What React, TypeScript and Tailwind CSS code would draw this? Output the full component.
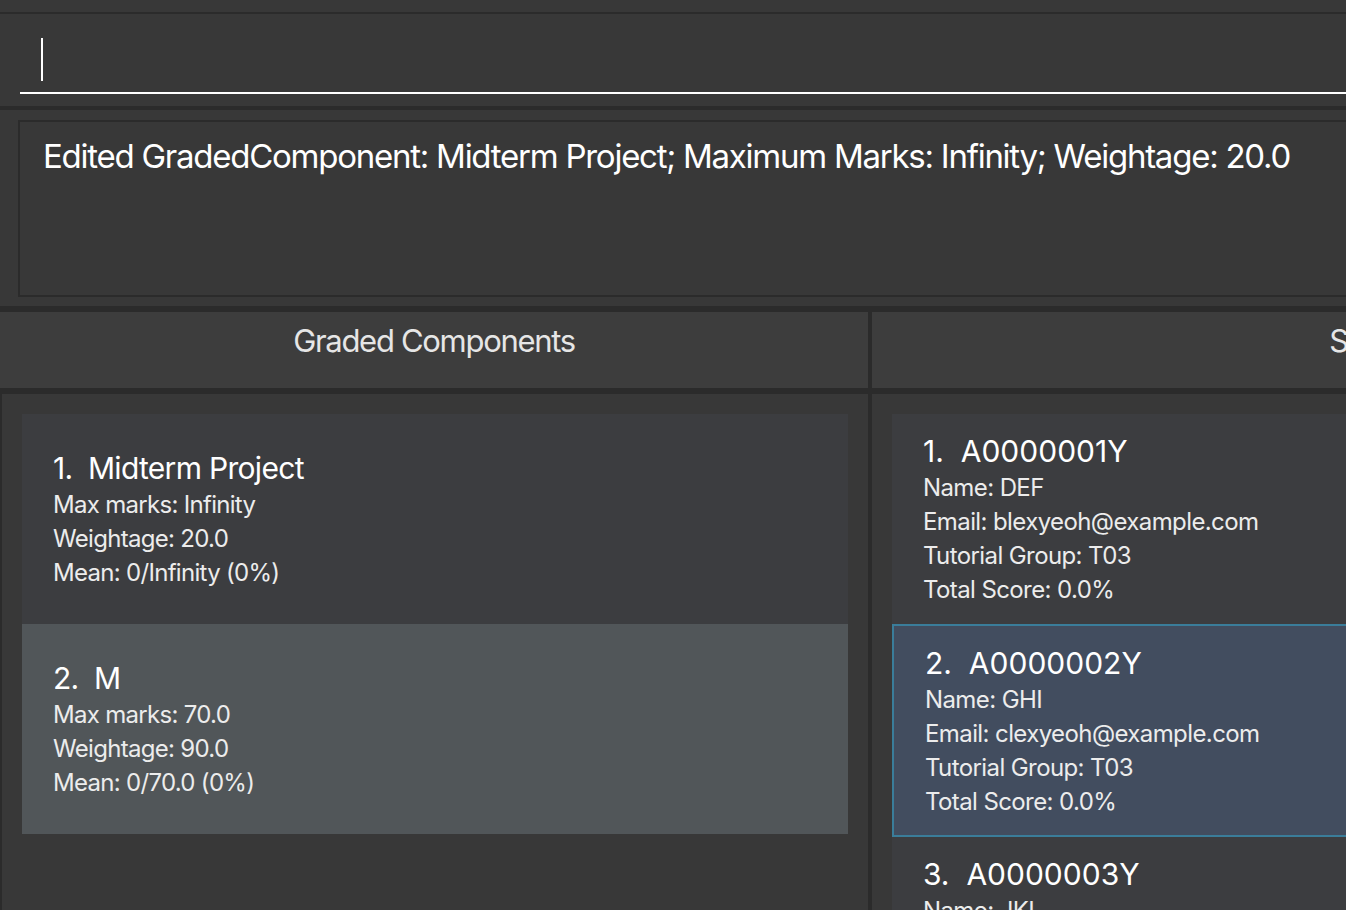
const font = { fontFamily: '"Inter", "Liberation Sans", sans-serif' };

type GradedComponent = {
  name: string;
  maxMarks: string;
  weightage: string;
  mean: string;
};

type Student = {
  id: string;
  name: string;
  email: string;
  tutorial: string;
  score: string;
};

const components: GradedComponent[] = [
  { name: "Midterm Project", maxMarks: "Infinity", weightage: "20.0", mean: "0/Infinity (0%)" },
  { name: "M", maxMarks: "70.0", weightage: "90.0", mean: "0/70.0 (0%)" },
];

const students: Student[] = [
  { id: "A0000001Y", name: "DEF", email: "blexyeoh@example.com", tutorial: "T03", score: "0.0%" },
  { id: "A0000002Y", name: "GHI", email: "clexyeoh@example.com", tutorial: "T03", score: "0.0%" },
  { id: "A0000003Y", name: "JKL", email: "dlexyeoh@example.com", tutorial: "T03", score: "0.0%" },
];

function ComponentCard({ index, item, selected }: { index: number; item: GradedComponent; selected?: boolean }) {
  return (
    <div
      className={
        "h-[210px] flex flex-col justify-center pl-[31px] " +
        (selected ? "bg-[#515659]" : "bg-[#3c3d40]")
      }
    >
      <div className="text-[30px] leading-[40px] tracking-[-0.7px] text-white">
        {index}.&nbsp;&nbsp;{item.name}
      </div>
      <div className="text-[24px] leading-[34px] tracking-[-0.7px] text-[#ececec]">
        <div>Max marks: {item.maxMarks}</div>
        <div>Weightage: {item.weightage}</div>
        <div>Mean: {item.mean}</div>
      </div>
    </div>
  );
}

function StudentCard({ index, s, selected }: { index: number; s: Student; selected?: boolean }) {
  return (
    <div
      className={
        "flex flex-col justify-center pl-[31px] " +
        (selected ? "h-[213px] bg-[#424d5f] border-2 border-[#3a7d9a]" : "h-[210px] bg-[#3c3d40]")
      }
    >
      <div className="text-[30px] leading-[40px] text-white">
        {index}.&nbsp;&nbsp;{s.id}
      </div>
      <div className="text-[24px] leading-[34px] tracking-[-0.6px] text-[#ececec]">
        <div>Name: {s.name}</div>
        <div>Email: {s.email}</div>
        <div>Tutorial Group: {s.tutorial}</div>
        <div>Total Score: {s.score}</div>
      </div>
    </div>
  );
}

export default function App() {
  return (
    <div className="w-[1346px] h-[910px] overflow-hidden bg-[#383838]" style={font}>
      <div className="w-[1906px] h-full flex flex-col">
        <div className="h-[12px] shrink-0" />
        <div className="h-[2px] bg-[#2b2b2b] shrink-0" />

        {/* command box */}
        <div className="h-[92px] shrink-0 pl-[20px] pt-[24px]">
          <div className="h-[56px] border-b-2 border-white pl-[21px]">
            <div className="w-[2px] h-[43px] bg-white" />
          </div>
        </div>
        <div className="h-[4px] bg-[#2b2b2b] shrink-0" />

        {/* result display */}
        <div className="h-[196px] shrink-0 pt-[10px] pb-[9px] pl-[18px]">
          <div className="h-full border-2 border-[#2b2b2b] pl-[23px] pt-[12px]">
            <div className="text-[33px] leading-[44px] tracking-[-1.25px] text-white">
              Edited GradedComponent: Midterm Project; Maximum Marks: Infinity; Weightage: 20.0
            </div>
          </div>
        </div>
        <div className="h-[6px] bg-[#2b2b2b] shrink-0" />

        {/* panel headers */}
        <div className="h-[76px] shrink-0 flex">
          <div className="w-[868px] bg-[#3d3d3d] flex items-center justify-center pb-[18px] text-[31px] tracking-[-1.3px] text-[#e6e6e6]">
            Graded Components
          </div>
          <div className="w-[4px] bg-[#2b2b2b]" />
          <div className="flex-1 bg-[#3d3d3d] flex items-center justify-center pb-[18px] text-[31px] tracking-[-1.3px] text-[#e6e6e6]">
            Students
          </div>
        </div>
        <div className="h-[6px] bg-[#2b2b2b] shrink-0" />

        {/* lists */}
        <div className="flex-1 flex">
          <div className="w-[2px] bg-[#2b2b2b]" />
          <div className="w-[866px] pt-[20px] px-[20px] flex flex-col">
            <ComponentCard index={1} item={components[0]} />
            <ComponentCard index={2} item={components[1]} selected />
          </div>
          <div className="w-[4px] bg-[#2b2b2b]" />
          <div className="flex-1 pt-[20px] pl-[20px] flex flex-col">
            {students.map((s, i) => (
              <StudentCard key={s.id} index={i + 1} s={s} selected={i === 1} />
            ))}
          </div>
        </div>
      </div>
    </div>
  );
}
